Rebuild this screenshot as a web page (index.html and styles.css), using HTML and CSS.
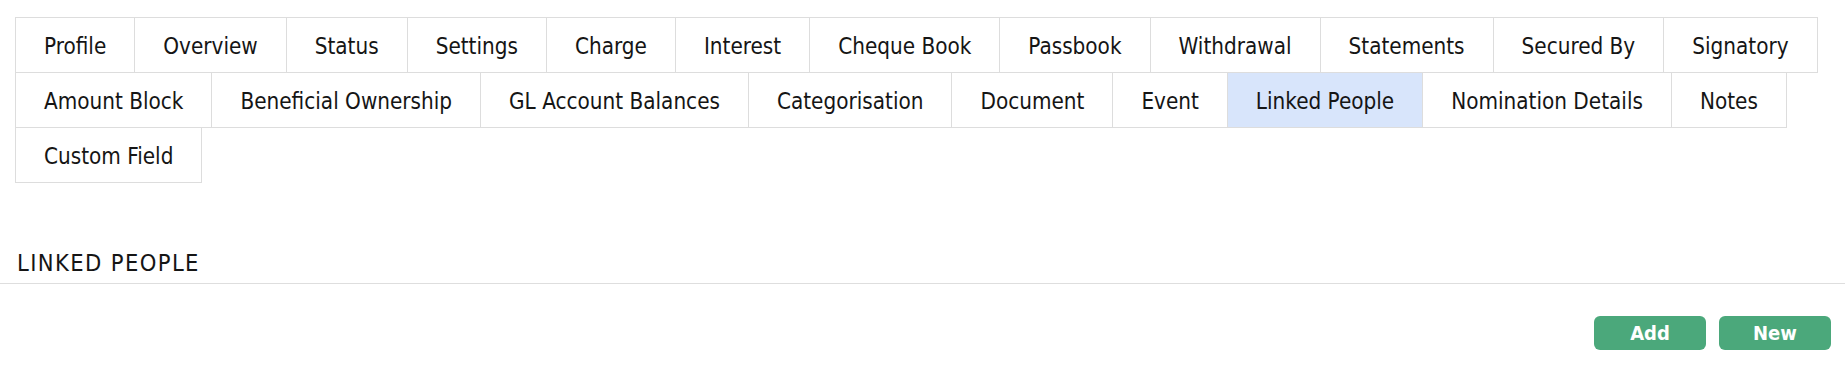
FILE: index.html
```html
<!doctype html>
<html>
<head>
    <title>Linked People</title>
    <meta charset="utf-8">
    <link rel="stylesheet" href="styles.css">
</head>
<body>
    <section class="account">
        <nav class="tab-container">
            <a class="tab">Profile</a>
            <a class="tab">Overview</a>
            <a class="tab">Status</a>
            <a class="tab">Settings</a>
            <a class="tab">Charge</a>
            <a class="tab">Interest</a>
            <a class="tab">Cheque Book</a>
            <a class="tab">Passbook</a>
            <a class="tab">Withdrawal</a>
            <a class="tab">Statements</a>
            <a class="tab">Secured By</a>
            <a class="tab">Signatory</a>
            <a class="tab">Amount Block</a>
            <a class="tab">Beneficial Ownership</a>
            <a class="tab">GL Account Balances</a>
            <a class="tab">Categorisation</a>
            <a class="tab">Document</a>
            <a class="tab">Event</a>
            <a class="tab active">Linked People</a>
            <a class="tab">Nomination Details</a>
            <a class="tab">Notes</a>
            <a class="tab">Custom Field</a>
        </nav>

        <h2 class="section-title">Linked People</h2>

        <div class="button-container">
            <button class="btn">Add</button>
            <button class="btn">New</button>
        </div>
    </section>
</body>
</html>
```
FILE: styles.css
```css
* {
    margin: 0;
    padding: 0;
    box-sizing: border-box;
    font-family: "DejaVu Sans Condensed", "Liberation Sans", sans-serif;
}

body {
    background: #ffffff;
    color: #151515;
}

.account {
    padding-top: 17px;
}

.tab-container {
    display: flex;
    flex-wrap: wrap;
    padding-left: 15px;
}

.tab {
    display: block;
    height: 56px;
    line-height: 51px;
    padding: 3px 28px 0;
    font-size: 22.3px;
    border: 1px solid #dddddd;
    margin: 0 -1px -1px 0;
    background: #ffffff;
    white-space: nowrap;
    cursor: pointer;
}

.tab.active {
    background: #d8e5fb;
}

.section-title {
    font-size: 23.5px;
    font-weight: normal;
    letter-spacing: 1.4px;
    text-transform: uppercase;
    padding: 67px 17px 6px;
    border-bottom: 1px solid #dedede;
}

.button-container {
    display: flex;
    justify-content: flex-end;
    gap: 13px;
    padding: 32px 14px 0;
}

.btn {
    width: 112px;
    height: 34px;
    border: none;
    border-radius: 6px;
    background: #4ba87b;
    color: #ffffff;
    font-size: 20px;
    font-weight: bold;
    cursor: pointer;
}
```
